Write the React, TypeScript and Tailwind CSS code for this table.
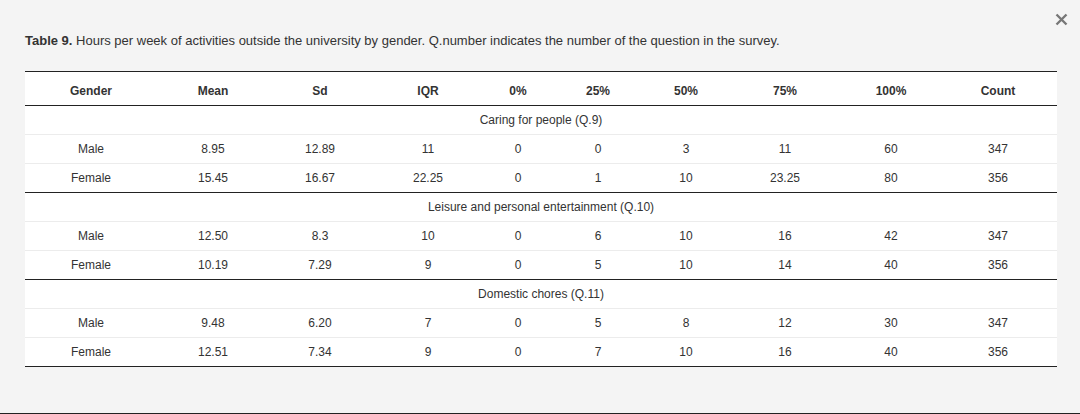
const columns = [
  { label: "Gender", w: "w-[132px]" },
  { label: "Mean", w: "w-[112px]" },
  { label: "Sd", w: "w-[102px]" },
  { label: "IQR", w: "w-[114px]" },
  { label: "0%", w: "w-[66px]" },
  { label: "25%", w: "w-[94px]" },
  { label: "50%", w: "w-[82px]" },
  { label: "75%", w: "w-[116px]" },
  { label: "100%", w: "w-[96px]" },
  { label: "Count", w: "w-[118px]" },
];

const groups = [
  {
    title: "Caring for people (Q.9)",
    rows: [
      ["Male", "8.95", "12.89", "11", "0", "0", "3", "11", "60", "347"],
      ["Female", "15.45", "16.67", "22.25", "0", "1", "10", "23.25", "80", "356"],
    ],
  },
  {
    title: "Leisure and personal entertainment (Q.10)",
    rows: [
      ["Male", "12.50", "8.3", "10", "0", "6", "10", "16", "42", "347"],
      ["Female", "10.19", "7.29", "9", "0", "5", "10", "14", "40", "356"],
    ],
  },
  {
    title: "Domestic chores (Q.11)",
    rows: [
      ["Male", "9.48", "6.20", "7", "0", "5", "8", "12", "30", "347"],
      ["Female", "12.51", "7.34", "9", "0", "7", "10", "16", "40", "356"],
    ],
  },
];

export default function App() {
  return (
    <div className="relative h-[414px] w-[1080px] overflow-hidden border-b border-[#222] bg-[#f4f4f4] font-['Liberation_Sans',Arial,sans-serif] text-[12px] text-[#333]">
      <button className="absolute right-[12px] top-[12px] flex h-[14px] w-[14px] items-center justify-center">
        <svg width="13" height="13" viewBox="0 0 13 13">
          <path d="M1.5 1.5 L11.5 11.5 M11.5 1.5 L1.5 11.5" stroke="#777" strokeWidth="2.4" strokeLinecap="butt" />
        </svg>
      </button>

      <div className="px-[25px] pt-[32px]">
        <p className="text-[13px] leading-[17px]">
          <span className="font-bold">Table 9.</span> Hours per week of activities outside the university by gender.
          Q.number indicates the number of the question in the survey.
        </p>

        <table className="mt-[22px] w-[1032px] table-fixed border-collapse bg-white">
          <thead>
            <tr className="h-[34px] border-y border-[#222]">
              {columns.map((c) => (
                <th key={c.label} className={`${c.w} p-0 pt-[5px] text-center font-bold`}>
                  {c.label}
                </th>
              ))}
            </tr>
          </thead>
          <tbody>
            {groups.map((g, gi) => (
              <GroupRows key={g.title} title={g.title} rows={g.rows} first={gi === 0} />
            ))}
          </tbody>
        </table>
      </div>
    </div>
  );
}

function GroupRows({ title, rows, first }: { title: string; rows: string[][]; first: boolean }) {
  return (
    <>
      <tr className={first ? "h-[29px]" : "h-[29px] border-t border-[#222]"}>
        <td colSpan={10} className="p-0 text-center">
          {title}
        </td>
      </tr>
      {rows.map((r, i) => (
        <tr
          key={r[0]}
          className={
            i === rows.length - 1
              ? "h-[29px] border-t border-b border-t-[#ececec] border-b-[#222]"
              : "h-[29px] border-t border-[#ececec]"
          }
        >
          {r.map((v, j) => (
            <td key={j} className="p-0 text-center">
              {v}
            </td>
          ))}
        </tr>
      ))}
    </>
  );
}
